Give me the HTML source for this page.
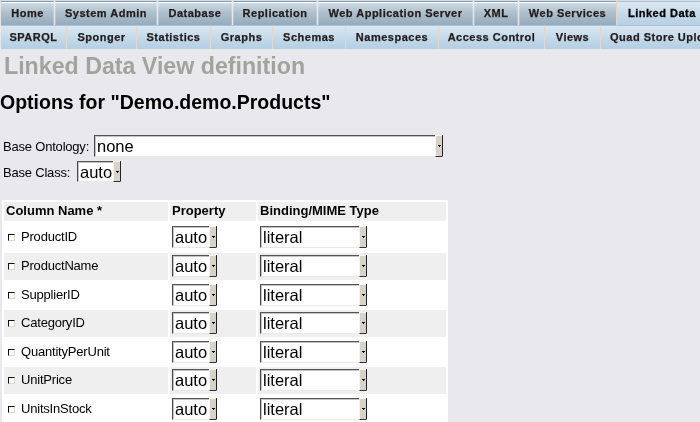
<!DOCTYPE html>
<html><head><meta charset="utf-8">
<style>
html,body{margin:0;padding:0;}
body{width:700px;height:422px;overflow:hidden;position:relative;will-change:transform;background:#e9e8ed;font-family:"Liberation Sans",sans-serif;color:#000;}
#r1{position:absolute;left:0;top:0;width:700px;height:25px;background:#d8dde2;}
.t1{position:absolute;top:1px;height:24px;box-sizing:border-box;border-top:1px solid #7f9ab0;
 background:linear-gradient(#ffffff 0,#ffffff 1px,#d0dae2 1px,#afc0cd 45%,#95abbc 100%);
 font-weight:bold;font-size:11px;letter-spacing:0.5px;color:#221c1c;-webkit-text-stroke:0.25px #221c1c;text-align:center;line-height:22px;white-space:nowrap;overflow:hidden;}
.t1.cur{background:linear-gradient(#dbe8f2 0,#c6daea 50%,#b8d0e4 100%);border-top:1px solid #a9c4da;}
.s1{position:absolute;top:0;width:1px;height:25px;background:#e8e8e8;box-shadow:-1px 0 0 rgba(255,255,255,0.2),1px 0 0 rgba(255,255,255,0.2);}
#r2{position:absolute;left:0;top:25px;width:700px;height:24px;background:#b4cee3;}
.t2{position:absolute;top:0;height:24px;box-sizing:border-box;border-top:1px solid #a9c5dd;
 background:linear-gradient(#d9e6f1 0,#c7dbea 45%,#b4cee3 100%);
 font-weight:bold;font-size:11px;letter-spacing:0.5px;color:#221c1c;-webkit-text-stroke:0.25px #221c1c;text-align:center;line-height:23px;white-space:nowrap;overflow:hidden;}
.s2{position:absolute;top:1px;width:1px;height:23px;background:#e2d6ce;}
.title{position:absolute;left:4px;top:53px;font-size:23.2px;font-weight:bold;color:#a2a39d;white-space:nowrap;}
.h3{position:absolute;left:0px;top:91px;font-size:19.5px;font-weight:bold;white-space:nowrap;}
.lbl{position:absolute;font-size:13px;letter-spacing:-0.2px;white-space:nowrap;}
.dd{position:absolute;box-sizing:border-box;background:#fff;box-shadow:inset 1px 1px 0 #c4c4c4;border-top:1px solid #555;border-left:1px solid #4a4a4a;border-right:1px solid #222;border-bottom:1px solid #ebe8df;font-size:16.5px;line-height:20px;padding-left:2px;white-space:nowrap;}
.btn{position:absolute;right:0;top:-1px;bottom:-1px;width:7px;box-sizing:border-box;background:#d7d3cb;border-top:1px solid #f6f4ee;border-left:1px solid #f7f5ef;border-bottom:1px solid #333;}
.btn:before{content:"";position:absolute;left:2px;top:50%;margin-top:-1px;width:3px;height:1px;background:#000;}
.btn:after{content:"";position:absolute;left:3px;top:50%;margin-top:0px;width:1px;height:1px;background:#000;}
#tbl{position:absolute;left:2px;top:200px;width:446px;height:230px;background:#fff;}
.cell{position:absolute;background:#efefef;}
.th{position:absolute;font-size:13px;font-weight:bold;white-space:nowrap;}
.cb{position:absolute;left:8px;width:7px;height:7px;box-sizing:border-box;background:#fff;border-top:1px solid #111;border-left:1px solid #111;border-right:1px solid #ddd8cc;border-bottom:1px solid #ddd8cc;}
.nm{position:absolute;left:21px;font-size:13px;letter-spacing:-0.2px;white-space:nowrap;}
</style></head><body>
<div id="r1">
 <div class="t1" style="left:1px;width:53px">Home</div>
 <div class="t1" style="left:55px;width:102px">System Admin</div>
 <div class="t1" style="left:158px;width:74px">Database</div>
 <div class="t1" style="left:233px;width:84px">Replication</div>
 <div class="t1" style="left:318px;width:155px">Web Application Server</div>
 <div class="t1" style="left:474px;width:44px">XML</div>
 <div class="t1" style="left:519px;width:97px">Web Services</div>
 <div class="s1" style="left:0;top:2px;height:23px;background:#e2e6ea;box-shadow:none"></div>
 <div class="s1" style="left:616px;background:#e4d4ca;box-shadow:none"></div>
 <div class="s1" style="left:54px"></div>
 <div class="s1" style="left:157px"></div>
 <div class="s1" style="left:232px"></div>
 <div class="s1" style="left:317px"></div>
 <div class="s1" style="left:473px"></div>
 <div class="s1" style="left:518px"></div>
</div>
<div id="r2">
 <div class="t2" style="left:1px;width:65px">SPARQL</div>
 <div class="t2" style="left:67px;width:69px">Sponger</div>
 <div class="t2" style="left:137px;width:73px">Statistics</div>
 <div class="t2" style="left:211px;width:61px">Graphs</div>
 <div class="t2" style="left:273px;width:72px">Schemas</div>
 <div class="t2" style="left:346px;width:92px">Namespaces</div>
 <div class="t2" style="left:439px;width:105px">Access Control</div>
 <div class="t2" style="left:545px;width:55px">Views</div>
 <div class="t2" style="left:601px;width:99px;text-align:left;padding-left:9px">Quad Store Upload</div>
 <div class="s2" style="left:0;top:0;height:24px;background:#e6e9ee"></div>
 <div class="s2" style="left:66px"></div>
 <div class="s2" style="left:136px"></div>
 <div class="s2" style="left:210px"></div>
 <div class="s2" style="left:272px"></div>
 <div class="s2" style="left:345px"></div>
 <div class="s2" style="left:438px"></div>
 <div class="s2" style="left:544px"></div>
 <div class="s2" style="left:600px"></div>
</div>
<div class="t1 cur" style="left:617px;width:83px;text-align:left;padding-left:11px;color:#000;-webkit-text-stroke:0.3px #000">Linked Data</div>
<div class="title">Linked Data View definition</div>
<div class="h3">Options for "Demo.demo.Products"</div>
<div class="lbl" style="left:3px;top:139px">Base Ontology:</div>
<div class="dd" style="left:94px;top:135px;width:349px;height:22px">none<div class="btn"></div></div>
<div class="lbl" style="left:3px;top:165px">Base Class:</div>
<div class="dd" style="left:77px;top:161px;width:44px;height:21px">auto<div class="btn"></div></div>
<div id="tbl"></div>
<div class="cell" style="left:4px;top:202px;width:164px;height:19px"></div>
<div class="cell" style="left:170px;top:202px;width:86px;height:19px"></div>
<div class="cell" style="left:258px;top:202px;width:188px;height:19px"></div>
<div class="th" style="left:6px;top:203px">Column Name *</div>
<div class="th" style="left:172px;top:203px">Property</div>
<div class="th" style="left:260px;top:203px">Binding/MIME Type</div>
<div class="cb" style="top:234px"></div>
<div class="nm" style="top:229px">ProductID</div>
<div class="dd" style="left:172px;top:226px;width:45px;height:22px">auto<div class="btn"></div></div>
<div class="dd" style="left:260px;top:226px;width:107px;height:22px">literal<div class="btn"></div></div>
<div class="cell" style="left:4px;top:253px;width:164px;height:27px"></div>
<div class="cell" style="left:170px;top:253px;width:86px;height:27px"></div>
<div class="cell" style="left:258px;top:253px;width:188px;height:27px"></div>
<div class="cb" style="top:263px"></div>
<div class="nm" style="top:258px">ProductName</div>
<div class="dd" style="left:172px;top:255px;width:45px;height:22px">auto<div class="btn"></div></div>
<div class="dd" style="left:260px;top:255px;width:107px;height:22px">literal<div class="btn"></div></div>
<div class="cb" style="top:292px"></div>
<div class="nm" style="top:287px">SupplierID</div>
<div class="dd" style="left:172px;top:284px;width:45px;height:22px">auto<div class="btn"></div></div>
<div class="dd" style="left:260px;top:284px;width:107px;height:22px">literal<div class="btn"></div></div>
<div class="cell" style="left:4px;top:310px;width:164px;height:27px"></div>
<div class="cell" style="left:170px;top:310px;width:86px;height:27px"></div>
<div class="cell" style="left:258px;top:310px;width:188px;height:27px"></div>
<div class="cb" style="top:320px"></div>
<div class="nm" style="top:315px">CategoryID</div>
<div class="dd" style="left:172px;top:312px;width:45px;height:22px">auto<div class="btn"></div></div>
<div class="dd" style="left:260px;top:312px;width:107px;height:22px">literal<div class="btn"></div></div>
<div class="cb" style="top:349px"></div>
<div class="nm" style="top:344px">QuantityPerUnit</div>
<div class="dd" style="left:172px;top:341px;width:45px;height:22px">auto<div class="btn"></div></div>
<div class="dd" style="left:260px;top:341px;width:107px;height:22px">literal<div class="btn"></div></div>
<div class="cell" style="left:4px;top:367px;width:164px;height:27px"></div>
<div class="cell" style="left:170px;top:367px;width:86px;height:27px"></div>
<div class="cell" style="left:258px;top:367px;width:188px;height:27px"></div>
<div class="cb" style="top:377px"></div>
<div class="nm" style="top:372px">UnitPrice</div>
<div class="dd" style="left:172px;top:369px;width:45px;height:22px">auto<div class="btn"></div></div>
<div class="dd" style="left:260px;top:369px;width:107px;height:22px">literal<div class="btn"></div></div>
<div class="cb" style="top:406px"></div>
<div class="nm" style="top:401px">UnitsInStock</div>
<div class="dd" style="left:172px;top:398px;width:45px;height:22px">auto<div class="btn"></div></div>
<div class="dd" style="left:260px;top:398px;width:107px;height:22px">literal<div class="btn"></div></div>
</body></html>
